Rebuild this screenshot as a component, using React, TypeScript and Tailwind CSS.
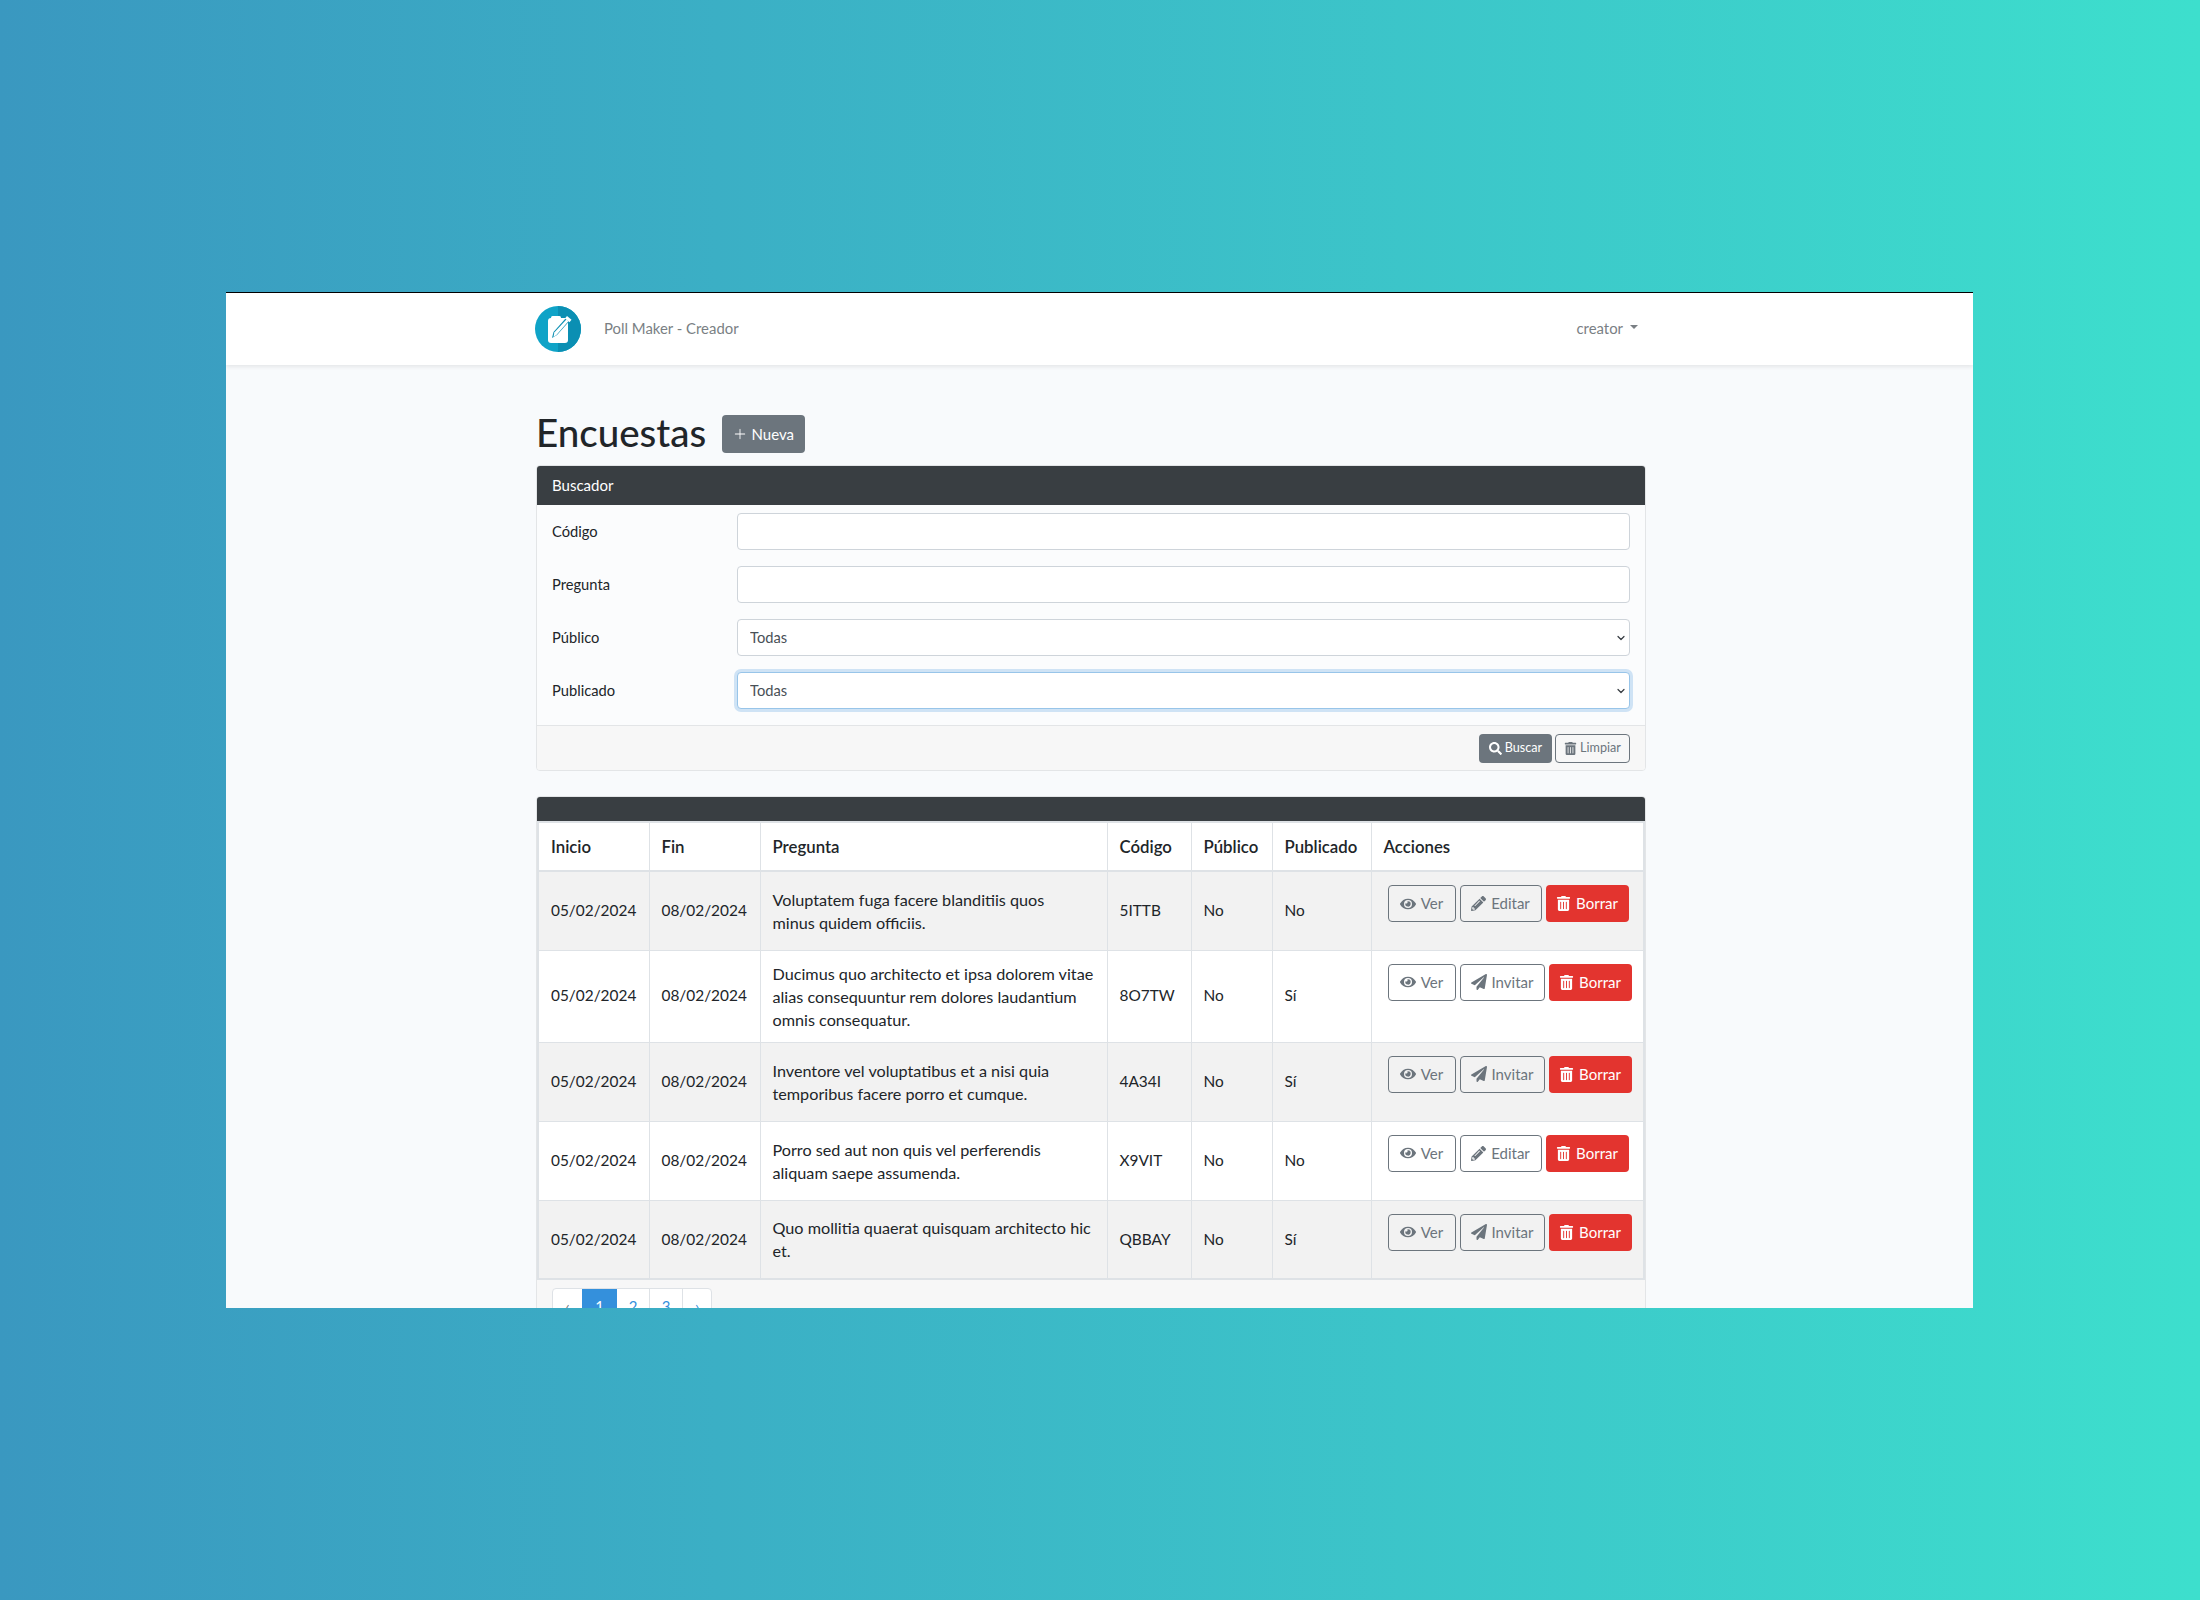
import { FaEye, FaPaperPlane, FaPencilAlt, FaTrashAlt, FaSearch } from 'react-icons/fa';
import { BsPlusLg } from 'react-icons/bs';
import { ReactNode } from 'react';

type Poll = {
  code: string;
  question: string[];
  publicPoll: string;
  published: string;
  action: 'Editar' | 'Invitar';
};

const polls: Poll[] = [
  { code: '5ITTB', question: ['Voluptatem fuga facere blanditiis quos', 'minus quidem officiis.'], publicPoll: 'No', published: 'No', action: 'Editar' },
  { code: '8O7TW', question: ['Ducimus quo architecto et ipsa dolorem vitae', 'alias consequuntur rem dolores laudantium', 'omnis consequatur.'], publicPoll: 'No', published: 'Sí', action: 'Invitar' },
  { code: '4A34I', question: ['Inventore vel voluptatibus et a nisi quia', 'temporibus facere porro et cumque.'], publicPoll: 'No', published: 'Sí', action: 'Invitar' },
  { code: 'X9VIT', question: ['Porro sed aut non quis vel perferendis', 'aliquam saepe assumenda.'], publicPoll: 'No', published: 'No', action: 'Editar' },
  { code: 'QBBAY', question: ['Quo mollitia quaerat quisquam architecto hic', 'et.'], publicPoll: 'No', published: 'Sí', action: 'Invitar' },
];

const headers = ['Inicio', 'Fin', 'Pregunta', 'Código', 'Público', 'Publicado', 'Acciones'];

function Logo() {
  return (
    <svg width="46" height="46" viewBox="0 0 46 46" className="shrink-0">
      <circle cx="23" cy="23" r="23" fill="#0fa3c7" />
      <path d="M23 0a23 23 0 0 1 0 46z" fill="#0b8fb3" />
      <rect x="13" y="12" width="20" height="25" rx="3" fill="#fff" />
      <rect x="16" y="10" width="10" height="5" rx="1.5" fill="#fff" />
      <path d="M17 32l1.5-6L31 12l3.5 3-12.5 14z" fill="#0b8fb3" />
      <path d="M18.5 31l.8-4.5L31.4 13.5l2 1.7L21.4 29z" fill="#fff" />
      <path d="M32 10l4.5 3.8-2 2.4-4.5-3.8z" fill="#fff" />
    </svg>
  );
}

function OutlineButton({ icon, label, width }: { icon: ReactNode; label: string; width: string }) {
  return (
    <button className={`${width} h-[37px] flex items-center justify-center gap-[5px] rounded-[4px] border border-[#6c757d] text-[#6c757d] text-[15px]`}>
      {icon}
      {label}
    </button>
  );
}

function PollRow({ poll, index }: { poll: Poll; index: number }) {
  const rowBg = index % 2 === 0 ? 'bg-[#f2f2f2]' : 'bg-white';
  const cell = 'border border-[#dee2e6] px-3 align-middle';
  return (
    <tr className={`${rowBg} h-[79px]`}>
      <td className={cell}>05/02/2024</td>
      <td className={cell}>08/02/2024</td>
      <td className={`${cell} leading-[23px] py-[11px] whitespace-nowrap text-[16.2px]`}>
        {poll.question.map((line) => (
          <div key={line}>{line}</div>
        ))}
      </td>
      <td className={cell}>{poll.code}</td>
      <td className={cell}>{poll.publicPoll}</td>
      <td className={cell}>{poll.published}</td>
      <td className="border border-[#dee2e6] pl-[16px] pt-[13px] align-top">
        <div className="flex gap-1">
          <OutlineButton icon={<FaEye size={16} />} label="Ver" width="w-[68px]" />
          {poll.action === 'Editar' ? (
            <OutlineButton icon={<FaPencilAlt size={15} />} label="Editar" width="w-[82px]" />
          ) : (
            <OutlineButton icon={<FaPaperPlane size={16} />} label="Invitar" width="w-[85px]" />
          )}
          <button className="w-[83px] h-[37px] flex items-center justify-center gap-[5px] rounded-[4px] bg-[#e3342f] text-white text-[15px]">
            <FaTrashAlt size={15} />
            Borrar
          </button>
        </div>
      </td>
    </tr>
  );
}

function SearchRow({ label, children }: { label: string; children: ReactNode }) {
  return (
    <div className="grid grid-cols-[185px_1fr] items-center">
      <label>{label}</label>
      {children}
    </div>
  );
}

function SelectField({ focused }: { focused?: boolean }) {
  const border = focused ? 'border-[#98c5e9] ring-[3px] ring-[#cfe3f5]' : 'border-[#ced4da]';
  return (
    <div className="relative">
      <select className={`w-full h-[37px] appearance-none rounded-[4px] border ${border} bg-white px-3 text-[#495057]`}>
        <option>Todas</option>
      </select>
      <svg width="8" height="8" viewBox="0 0 16 16" className="absolute right-[5px] top-[15px] pointer-events-none">
        <path d="M2 5l6 6 6-6" fill="none" stroke="#343a40" strokeWidth="2.4" strokeLinecap="round" strokeLinejoin="round" />
      </svg>
    </div>
  );
}

export default function App() {
  return (
    <div className="h-[1600px] pl-[226px] pt-[292px] bg-gradient-to-r from-[#3a98c0] to-[#3ddfcd] font-['Lato',sans-serif] text-[15.4px] text-[#212529]">
      <div className="w-[1747px] h-[1016px] overflow-hidden bg-[#f8fafc] border-t border-black">
        <nav className="h-[72px] bg-white shadow-[0_2px_4px_rgba(0,0,0,0.08)]">
          <div className="w-[1110px] h-full ml-[309px] flex items-center text-[14.9px] text-[#7a7f84]">
            <Logo />
            <span className="ml-[23px] mb-px">Poll Maker - Creador</span>
            <span className="ml-auto mb-px">creator</span>
            <span className="ml-[7px] mr-[7px] mb-1 w-0 h-0 border-x-[4px] border-x-transparent border-t-[4px] border-t-[#7a7f84]" />
          </div>
        </nav>

        <main className="w-[1110px] ml-[310px] pt-[50px]">
          <div className="flex items-center gap-4 h-[38px] mb-3">
            <h1 className="text-[38.5px] font-medium leading-none mb-1">Encuestas</h1>
            <button className="w-[83px] h-[38px] flex items-center justify-center gap-[4px] rounded-[4px] bg-[#6c757d] text-white text-[15px]">
              <BsPlusLg size={14} />
              Nueva
            </button>
          </div>

          <section className="rounded-[4px] border border-[#e3e5e7] overflow-hidden">
            <div className="h-[39px] flex items-center px-[15px] bg-[#393e42] text-white text-[15px]">Buscador</div>
            <div className="flex flex-col gap-4 pt-2 pb-4 pl-[15px] pr-[15px] bg-[#fbfcfd] text-[14.7px]">
              <SearchRow label="Código">
                <input className="h-[37px] rounded-[4px] border border-[#ced4da] bg-white" />
              </SearchRow>
              <SearchRow label="Pregunta">
                <input className="h-[37px] rounded-[4px] border border-[#ced4da] bg-white" />
              </SearchRow>
              <SearchRow label="Público">
                <SelectField />
              </SearchRow>
              <SearchRow label="Publicado">
                <SelectField focused />
              </SearchRow>
            </div>
            <div className="h-[45px] flex items-center justify-end gap-[3px] pr-[15px] bg-[#f7f7f7] border-t border-[#e3e5e7] text-[12.6px]">
              <button className="w-[73px] h-[29px] flex items-center justify-center gap-[3px] rounded-[4px] bg-[#6c757d] text-white">
                <FaSearch size={13} />
                Buscar
              </button>
              <button className="w-[75px] h-[29px] flex items-center justify-center gap-[3px] rounded-[4px] border border-[#6c757d] text-[#6c757d]">
                <FaTrashAlt size={13} />
                Limpiar
              </button>
            </div>
          </section>

          <section className="mt-[25px] rounded-[4px] border border-[#e3e5e7] bg-[#f7f7f7] overflow-hidden">
            <div className="h-[24px] bg-[#393e42]" />
            <table className="w-full table-fixed border-collapse border-2 border-[#dee2e6] bg-white">
              <colgroup>
                <col className="w-[111px]" />
                <col className="w-[111px]" />
                <col className="w-[347px]" />
                <col className="w-[84px]" />
                <col className="w-[81px]" />
                <col className="w-[99px]" />
                <col />
              </colgroup>
              <thead>
                <tr className="h-[49px]">
                  {headers.map((header) => (
                    <th key={header} className="border border-b-2 border-[#dee2e6] px-3 text-left font-semibold text-[16.8px]">
                      {header}
                    </th>
                  ))}
                </tr>
              </thead>
              <tbody>
                {polls.map((poll, index) => (
                  <PollRow key={poll.code} poll={poll} index={index} />
                ))}
              </tbody>
            </table>
            <div className="pt-[8px] pl-[15px] h-[60px]">
              <div className="inline-flex h-[37px] rounded-[4px] border border-[#dee2e6] bg-white text-[#3490dc] text-[15px]">
                <span className="w-[29px] flex items-center justify-center text-[#6c757d]">‹</span>
                <span className="w-[35px] flex items-center justify-center bg-[#3490dc] text-white">1</span>
                <span className="w-[33px] flex items-center justify-center border-r border-[#dee2e6]">2</span>
                <span className="w-[33px] flex items-center justify-center border-r border-[#dee2e6]">3</span>
                <span className="w-[28px] flex items-center justify-center">›</span>
              </div>
            </div>
          </section>
        </main>
      </div>
    </div>
  );
}
